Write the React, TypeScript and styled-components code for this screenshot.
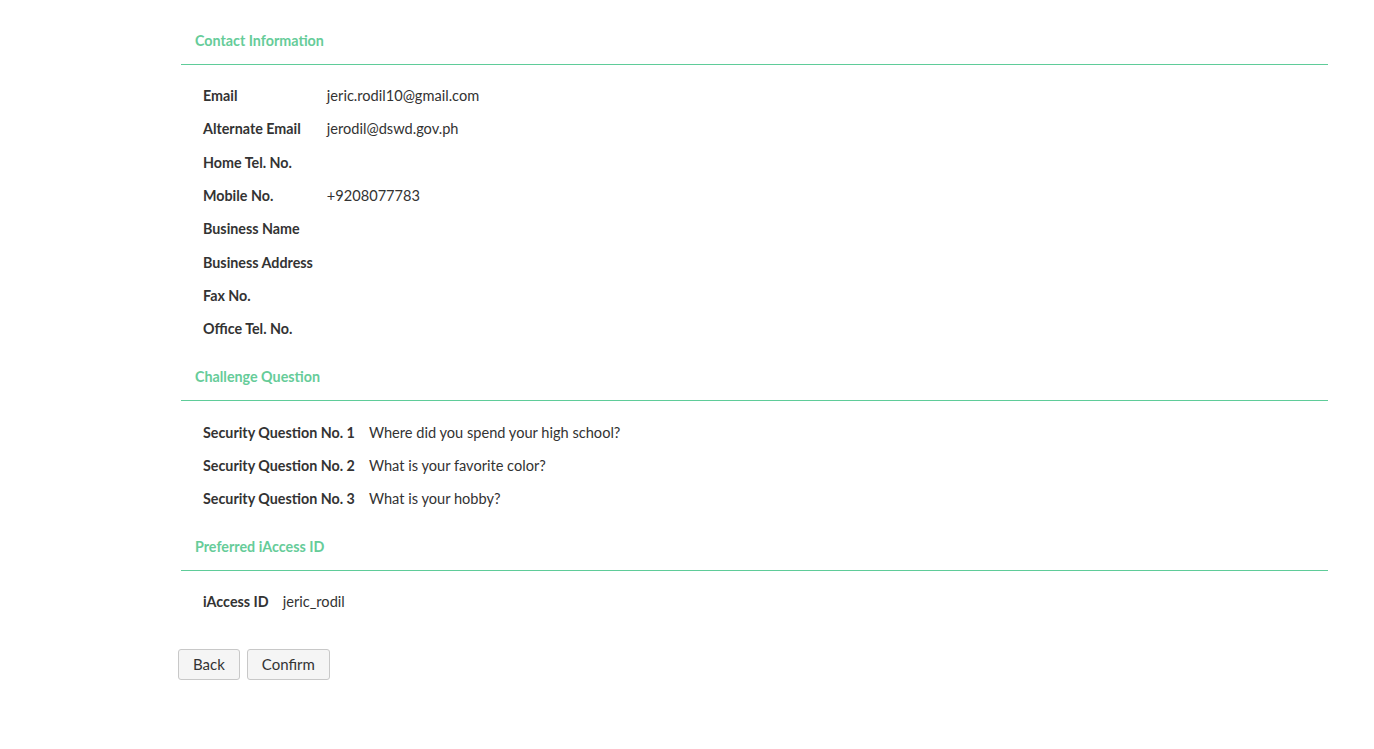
import React from "react";
import styled, { createGlobalStyle } from "styled-components";

const GlobalStyle = createGlobalStyle`
  body {
    margin: 0;
    background: #fff;
    font-family: Lato, "Open Sans", sans-serif;
    font-size: 14px;
    color: #333;
  }
`;

const Page = styled.div`
  width: 1147px;
  margin-left: 181px;
  padding-top: 31px;
`;

const Section = styled.section`
  & + & {
    margin-top: 22px;
  }
`;

const SectionTitle = styled.h4`
  margin: 0;
  padding: 0 0 13px 14px;
  line-height: 20px;
  font-size: 14.3px;
  font-weight: 700;
  color: #66cc99;
  border-bottom: 1px solid #5fcc99;
`;

const InfoTable = styled.table`
  border-collapse: collapse;
  margin: 14px 0 0 22px;
`;

const Row = styled.tr`
  height: 33.3px;
`;

const Label = styled.th`
  padding: 0 14px 0 0;
  text-align: left;
  font-size: 14.3px;
  font-weight: 700;
  color: #333;
  white-space: nowrap;
  vertical-align: middle;
`;

const Value = styled.td`
  padding: 0;
  font-size: 14.6px;
  color: #333;
  vertical-align: middle;
`;

const Actions = styled.div`
  display: flex;
  gap: 7px;
  margin: 30px 0 0 -3px;
`;

const Button = styled.button`
  height: 31px;
  padding: 0 14px;
  font-family: Lato, "Open Sans", sans-serif;
  font-size: 15px;
  color: #333;
  background: #f5f5f5;
  border: 1px solid #c8c8c8;
  border-radius: 3px;
  cursor: pointer;
`;

type Field = [string, string];

const contact: Field[] = [
  ["Email", "jeric.rodil10@gmail.com"],
  ["Alternate Email", "jerodil@dswd.gov.ph"],
  ["Home Tel. No.", ""],
  ["Mobile No.", "+9208077783"],
  ["Business Name", ""],
  ["Business Address", ""],
  ["Fax No.", ""],
  ["Office Tel. No.", ""],
];

const challenge: Field[] = [
  ["Security Question No. 1", "Where did you spend your high school?"],
  ["Security Question No. 2", "What is your favorite color?"],
  ["Security Question No. 3", "What is your hobby?"],
];

const access: Field[] = [["iAccess ID", "jeric_rodil"]];

const InfoSection: React.FC<{ title: string; fields: Field[] }> = ({ title, fields }) => (
  <Section>
    <SectionTitle>{title}</SectionTitle>
    <InfoTable>
      <tbody>
        {fields.map(([label, value]) => (
          <Row key={label}>
            <Label>{label}</Label>
            <Value>{value}</Value>
          </Row>
        ))}
      </tbody>
    </InfoTable>
  </Section>
);

const App: React.FC = () => (
  <>
    <GlobalStyle />
    <Page>
      <InfoSection title="Contact Information" fields={contact} />
      <InfoSection title="Challenge Question" fields={challenge} />
      <InfoSection title="Preferred iAccess ID" fields={access} />
      <Actions>
        <Button>Back</Button>
        <Button>Confirm</Button>
      </Actions>
    </Page>
  </>
);

export default App;
